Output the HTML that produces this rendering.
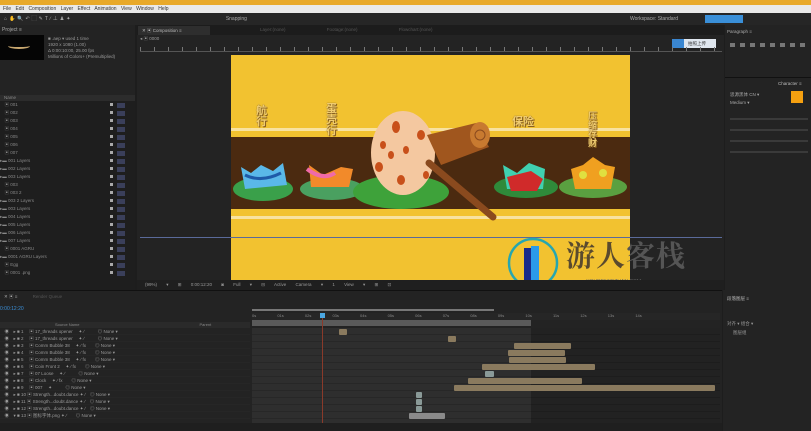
<!DOCTYPE html><html><head><meta charset="utf-8"><style>
*{margin:0;padding:0;box-sizing:border-box}
body{width:811px;height:431px;overflow:hidden;background:#1d1d1d;font-family:"Liberation Sans","Noto Sans CJK SC",sans-serif;font-size:5px;color:#8a8a8a;position:relative}
.a{position:absolute}
.row{position:absolute;left:0;width:250px;height:7px;border-bottom:1px solid #262626;font-size:4.5px;line-height:7px;color:#9a9a9a}
.bar{position:absolute;height:6px;background:#8a7a5e;border-radius:1px}
.pr{position:absolute;left:0;width:134px;height:8px;font-size:4.5px;line-height:8px;color:#888}
.lb{position:absolute;font-weight:bold;color:#f0cc70;text-shadow:0 0 1px #7a5a20,1px 1px 0 #8a6020}
</style></head><body>
<div class="a" style="left:0;top:0;width:811px;height:5px;background:#e8a92a"></div>
<div class="a" style="left:0;top:5px;width:811px;height:8px;background:#e9e9e9;color:#333;font-size:5px;line-height:8px;padding-left:3px;word-spacing:3px">File Edit Composition Layer Effect Animation View Window Help</div>
<div class="a" style="left:0;top:13px;width:811px;height:12px;background:#262626;color:#aaa;font-size:5px;line-height:12px;padding-left:4px;letter-spacing:2px">⌂✋🔍↶⬚✎T∕⊥♟✦ <span style="margin-left:150px;letter-spacing:0">Snapping</span><span style="position:absolute;left:630px;letter-spacing:0">Workspace: Standard</span></div>
<div class="a" style="left:705px;top:15px;width:38px;height:8px;background:#3a8fd8"></div>
<div class="a" style="left:0;top:25px;width:135px;height:265px;background:#232323"></div>
<div class="a" style="left:2px;top:27px;font-size:5px;color:#aaa">Project ≡</div>
<div class="a" style="left:0;top:35px;width:44px;height:25px;background:#050505"></div>
<div class="a" style="left:8px;top:43px;width:22px;height:6px;border-bottom:2px solid #c9a870;border-radius:0 0 50% 50%"></div>
<div class="a" style="left:48px;top:36px;font-size:4.5px;line-height:6px;color:#999">■ .aep ▾ used 1 time<br>1920 x 1080 (1.00)<br>Δ 0:00:10:00, 25.00 fps<br>Millions of Colors+ (Premultiplied)</div>
<div class="a" style="left:0;top:95px;width:135px;height:6px;background:#2c2c2c;font-size:4.5px;line-height:6px;padding-left:4px">Name</div>
<div class="a" style="left:0;top:101px;width:135px;height:189px;background:#1e1e1e"></div>
<div class="a" style="left:0;top:101px;width:135px">
<div class="pr" style="top:0">　▣ 001</div><div class="pr" style="top:8px">　▣ 002</div><div class="pr" style="top:16px">　▣ 003</div><div class="pr" style="top:24px">　▣ 004</div><div class="pr" style="top:32px">　▣ 005</div><div class="pr" style="top:40px">　▣ 006</div><div class="pr" style="top:48px">　▣ 007</div><div class="pr" style="top:56px">▸▬ 001 Layers</div><div class="pr" style="top:64px">▸▬ 002 Layers</div><div class="pr" style="top:72px">▸▬ 003 Layers</div><div class="pr" style="top:80px">　▣ 003</div><div class="pr" style="top:88px">　▣ 003 2</div><div class="pr" style="top:96px">▸▬ 003 2 Layers</div><div class="pr" style="top:104px">▸▬ 003 Layers</div><div class="pr" style="top:112px">▸▬ 004 Layers</div><div class="pr" style="top:120px">▸▬ 005 Layers</div><div class="pr" style="top:128px">▸▬ 006 Layers</div><div class="pr" style="top:136px">▸▬ 007 Layers</div><div class="pr" style="top:144px">　▣ 0001 AGRU</div><div class="pr" style="top:152px">▸▬ 0001 AGRU Layers</div><div class="pr" style="top:160px">　▣ Egg</div><div class="pr" style="top:168px">　▣ 0001 .png</div>
</div>
<div class="a" style="left:110px;top:103px;width:3px;height:175px;background:repeating-linear-gradient(#aaa 0 3px,transparent 3px 8px)"></div>
<div class="a" style="left:117px;top:103px;width:8px;height:175px;background:repeating-linear-gradient(#3a3f5a 0 5px,transparent 5px 8px)"></div>
<div class="a" style="left:137px;top:25px;width:587px;height:265px;background:#232323"></div>
<div class="a" style="left:137px;top:25px;width:587px;height:10px;background:#1c1c1c"></div>
<div class="a" style="left:138px;top:26px;width:72px;height:9px;background:#2e2e2e;font-size:4.5px;line-height:9px;color:#bbb;padding-left:4px">✕ ▣ Composition ≡</div>
<div class="a" style="left:260px;top:27px;font-size:4.5px;color:#555;word-spacing:40px">Layer:(none) Footage:(none) Flowchart:(none)</div>
<div class="a" style="left:140px;top:36px;font-size:4.5px;color:#999">◂ ▣ 0000</div>
<div class="a" style="left:672px;top:39px;width:44px;height:9px;background:#dfe6ee"></div>
<div class="a" style="left:672px;top:39px;width:12px;height:9px;background:#3a86d0"></div>
<div class="a" style="left:688px;top:41px;font-size:4.5px;color:#333">拍照上传</div>
<div class="a" style="left:140px;top:47px;width:582px;height:4px;background:repeating-linear-gradient(90deg,#777 0 1px,transparent 1px 14px)"></div>
<div class="a" style="left:140px;top:51px;width:582px;height:1px;background:#555"></div>
<div class="a" style="left:231px;top:55px;width:399px;height:225px;background:#f2c230"></div>
<div class="a" style="left:231px;top:128px;width:399px;height:3px;background:#f8e2a0"></div>
<div class="a" style="left:231px;top:137px;width:399px;height:72px;background:#4b2a10"></div>
<div class="a" style="left:231px;top:216px;width:399px;height:3px;background:#f8e2a0"></div>
<div class="a" style="left:140px;top:237px;width:582px;height:1px;background:#5a6a9a"></div>
<div class="lb" style="left:256px;top:106px;width:11px;font-size:11px;line-height:11px">航行</div>
<div class="lb" style="left:326px;top:104px;width:11px;font-size:11px;line-height:11px">蛋壳行</div>
<div class="lb" style="left:512px;top:113px;font-size:11px">保险</div>
<div class="lb" style="left:588px;top:112px;width:10px;font-size:9px;line-height:9px">压缩存财</div>
<svg class="a" style="left:231px;top:55px" width="399" height="225">
<ellipse cx="32" cy="134" rx="30" ry="12" fill="#3aa04a"/>
<path d="M10 112 L20 118 L30 110 L42 116 L52 108 L56 130 L14 134Z" fill="#5ab8e8"/><path d="M14 120 Q30 128 50 118" stroke="#1e5aa8" stroke-width="3" fill="none"/>
<ellipse cx="101" cy="134" rx="32" ry="11" fill="#4aa060"/>
<path d="M78 110 L92 120 L110 112 L122 114 L118 132 L80 132Z" fill="#f28a2a"/><path d="M76 114 Q92 126 104 118" stroke="#f06aa8" stroke-width="4" fill="none"/>
<ellipse cx="170" cy="137" rx="48" ry="17" fill="#3ea23a"/>
<ellipse cx="172" cy="98" rx="32" ry="42" fill="#f4c8a0"/>
<g fill="#c8501a"><ellipse cx="165" cy="72" rx="4" ry="6"/><ellipse cx="190" cy="80" rx="4" ry="5"/><ellipse cx="152" cy="90" rx="3" ry="4"/><ellipse cx="175" cy="95" rx="3" ry="4"/><ellipse cx="148" cy="112" rx="4" ry="5"/><ellipse cx="170" cy="125" rx="4" ry="5"/><ellipse cx="160" cy="100" rx="3" ry="4"/><ellipse cx="195" cy="120" rx="3" ry="4"/></g>
<path d="M198 108 L262 162" stroke="#8a4a1e" stroke-width="7" stroke-linecap="round"/>
<path d="M196 80 L245 68 L258 92 L210 110Z" fill="#a0561e"/>
<ellipse cx="249" cy="80" rx="10" ry="13" fill="#c87a30"/><circle cx="249" cy="80" r="5" fill="none" stroke="#8a4a1e"/>
<ellipse cx="295" cy="132" rx="32" ry="11" fill="#2f8a3a"/>
<path d="M272 110 L286 118 L298 108 L314 114 L312 134 L276 134Z" fill="#40d0b0"/><path d="M276 122 L300 116 L312 124 L306 136 L280 136Z" fill="#d02a2a"/>
<ellipse cx="362" cy="132" rx="34" ry="11" fill="#5aa040"/>
<path d="M340 114 L352 110 L362 102 L374 110 L384 112 L380 134 L344 134Z" fill="#f0a020"/><circle cx="352" cy="120" r="4" fill="#e0e040"/><circle cx="372" cy="118" r="4" fill="#e0e040"/>
</svg>
<svg class="a" style="left:506px;top:236px" width="56" height="54"><circle cx="27" cy="27" r="24" fill="none" stroke="#26a6b0" stroke-width="2.5"/><rect x="18" y="12" width="7" height="32" fill="#1a2a8a"/><rect x="25" y="10" width="8" height="34" fill="#2a9ae8"/></svg>
<div class="a" style="left:566px;top:238px;font-family:'Noto Serif CJK SC',serif;font-size:29px;font-weight:bold;line-height:34px;color:#5a4a2e;letter-spacing:1px">游人<span style="color:#555">客栈</span></div>
<div class="a" style="left:570px;top:279px;font-size:5px;color:#666">——— YOURENKEZHAN.COM ———</div>
<div class="a" style="left:137px;top:280px;width:587px;height:10px;background:#1f1f1f;font-size:4.5px;line-height:10px;color:#999;padding-left:8px;word-spacing:8px">(99%) ▾ ⊞ 0:00:12:20 ◙ Full ▾ ⊟ Active Camera ▾ 1 View ▾ ⊞ ⊡</div>
<div class="a" style="left:725px;top:25px;width:86px;height:265px;background:#232323"></div>
<div class="a" style="left:727px;top:29px;font-size:4.5px;color:#aaa">Paragraph ≡</div>
<div class="a" style="left:730px;top:43px;width:78px;height:4px;background:repeating-linear-gradient(90deg,#777 0 5px,transparent 5px 10px)"></div>
<div class="a" style="left:725px;top:77px;width:86px;height:1px;background:#111"></div>
<div class="a" style="left:778px;top:81px;font-size:4.5px;color:#bbb">Character ≡</div>
<div class="a" style="left:730px;top:92px;font-size:4.5px;color:#aaa">思源黑体 CN ▾</div>
<div class="a" style="left:791px;top:91px;width:12px;height:12px;background:#f5a010"></div>
<div class="a" style="left:730px;top:100px;font-size:4.5px;color:#aaa">Medium ▾</div>
<div class="a" style="left:730px;top:115px;width:78px;height:45px;background:repeating-linear-gradient(transparent 0 3px,#3a3a3a 3px 5px,transparent 5px 11px)"></div>
<div class="a" style="left:0;top:290px;width:722px;height:141px;background:#232323"></div>
<div class="a" style="left:0;top:290px;width:722px;height:1px;background:#111"></div>
<div class="a" style="left:4px;top:294px;font-size:4.5px;color:#aaa">✕ ▣ ≡ <span style="color:#555;margin-left:14px">Render Queue</span></div>
<div class="a" style="left:0;top:306px;font-size:5px;color:#3a8fd8">0:00:12:20</div>
<div class="a" style="left:0;top:322px;width:250px;height:6px;background:#2a2a2a;font-size:4px;line-height:6px;color:#888;padding-left:55px">Source Name<span style="margin-left:120px">Parent</span></div>
<div class="a" style="left:0;top:328px;width:250px">
<div class="row" style="top:0">　◉　▸ ■ 1 　▣ 17_threads opener　 ✦ ∕　　　◎ None ▾</div>
<div class="row" style="top:7px">　◉　▸ ■ 2 　▣ 17_threads opener　 ✦ ∕　　　◎ None ▾</div>
<div class="row" style="top:14px">　◉　▸ ■ 3 　▣ Comm Bubble 38　 ✦ ∕ fx　　◎ None ▾</div>
<div class="row" style="top:21px">　◉　▸ ■ 4 　▣ Comm Bubble 38　 ✦ ∕ fx　　◎ None ▾</div>
<div class="row" style="top:28px">　◉　▸ ■ 5 　▣ Comm Bubble 38　 ✦ ∕ fx　　◎ None ▾</div>
<div class="row" style="top:35px">　◉　▸ ■ 6 　▣ Coin Front 2　 ✦ ∕ fx　　◎ None ▾</div>
<div class="row" style="top:42px">　◉　▸ ■ 7 　▣ 07 Loose　 ✦ ∕　　　◎ None ▾</div>
<div class="row" style="top:49px">　◉　▸ ■ 8 　▣ Clock　 ✦ ∕ fx　　◎ None ▾</div>
<div class="row" style="top:56px">　◉　▸ ■ 9 　▣ 007　 ✦　　　◎ None ▾</div>
<div class="row" style="top:63px">　◉　▸ ■ 10 ▣ Strength...doubt.dance ✦ ∕　◎ None ▾</div>
<div class="row" style="top:70px">　◉　▸ ■ 11 ▣ Strength...doubt.dance ✦ ∕　◎ None ▾</div>
<div class="row" style="top:77px">　◉　▸ ■ 12 ▣ Strength...doubt.dance ✦ ∕　◎ None ▾</div>
<div class="row" style="top:84px">　◉　▾ ■ 13 ▣ 图标字体.png ✦ ∕　　◎ None ▾</div>
</div>
<div class="a" style="left:252px;top:309px;width:242px;height:2px;background:#777"></div>
<div class="a" style="left:252px;top:313px;width:468px;height:7px;background:#262626;font-size:4px;color:#888;word-spacing:20px">0s 01s 02s 03s 04s 05s 06s 07s 08s 09s 10s 11s 12s 13s 14s</div>
<div class="a" style="left:252px;top:320px;width:279px;height:6px;background:#5a5a5a"></div>
<div class="a" style="left:252px;top:328px;width:468px;height:95px;background:repeating-linear-gradient(#2e2e2e 0 6px,#272727 6px 7px)"></div>
<div class="a" style="left:531px;top:328px;width:189px;height:95px;background:rgba(0,0,0,0.25)"></div>
<div class="a" style="left:322px;top:314px;width:1px;height:115px;background:#8a3a2a"></div>
<div class="a" style="left:320px;top:313px;width:5px;height:5px;background:#4aa6e0"></div>
<div class="bar" style="left:339px;top:329px;width:8px"></div>
<div class="bar" style="left:448px;top:336px;width:8px"></div>
<div class="bar" style="left:514px;top:343px;width:57px"></div>
<div class="bar" style="left:508px;top:350px;width:57px"></div>
<div class="bar" style="left:509px;top:357px;width:57px"></div>
<div class="bar" style="left:482px;top:364px;width:113px"></div>
<div class="bar" style="left:485px;top:371px;width:9px;background:#8a9a98"></div>
<div class="bar" style="left:468px;top:378px;width:114px"></div>
<div class="bar" style="left:454px;top:385px;width:261px"></div>
<div class="bar" style="left:416px;top:392px;width:6px;background:#8a9a98"></div>
<div class="bar" style="left:416px;top:399px;width:6px;background:#8a9a98"></div>
<div class="bar" style="left:416px;top:406px;width:6px;background:#8a9a98"></div>
<div class="bar" style="left:409px;top:413px;width:36px;background:#8a8a8a"></div>
<div class="a" style="left:0;top:423px;width:722px;height:8px;background:#1f1f1f"></div>
<div class="a" style="left:723px;top:290px;width:88px;height:141px;background:#232323"></div>
<div class="a" style="left:727px;top:296px;font-size:4.5px;color:#bbb">段落图层 ≡</div>
<div class="a" style="left:727px;top:321px;font-size:4.5px;color:#999">对齐 ▾ 组合 ▾</div>
<div class="a" style="left:733px;top:330px;font-size:4.5px;color:#999">图层组</div>
</body></html>
